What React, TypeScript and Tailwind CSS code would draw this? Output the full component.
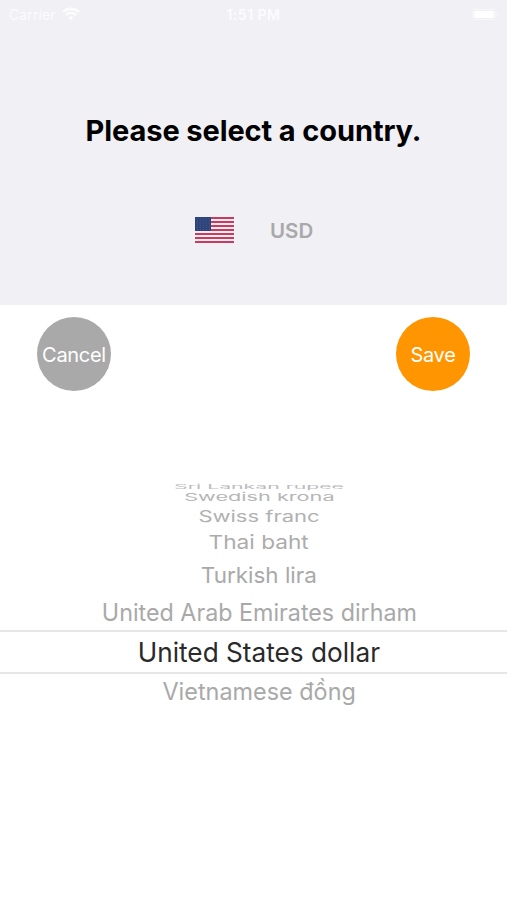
const rows = [
  { name: "Sri Lankan rupee", row: "h-[6px]", text: "text-[22px] scale-x-[0.965] scale-y-[0.27] text-[#bcbcbc]" },
  { name: "Swedish krona", row: "h-[14px]", text: "text-[22px] scale-x-[0.985] scale-y-[0.5] text-[#b6b6b6]" },
  { name: "Swiss franc", row: "h-[23px]", text: "text-[22px] scale-x-[1] scale-y-[0.7] text-[#b1b1b1]" },
  { name: "Thai baht", row: "h-[30px]", text: "text-[22px] scale-x-[1.03] scale-y-[0.88] text-[#acacac]" },
  { name: "Turkish lira", row: "h-[35px]", text: "text-[22px] scale-x-[1.02] text-[#a9a9a9]" },
  { name: "United Arab Emirates dirham", row: "h-[38px] pt-[3px]", text: "text-[24px] scale-x-[0.97] text-[#a9a9a9]" },
  { name: "United States dollar", row: "h-[44px] border-y-2 border-[#e6e6e6]", text: "text-[27px] scale-x-[0.97] text-[#2a2a2a]" },
  { name: "Vietnamese đồng", row: "h-[36px]", text: "text-[24px] scale-x-[0.975] text-[#a9a9a9]" },
];

function Flag() {
  return (
    <svg width="39" height="26" viewBox="0 0 39 26">
      <rect width="39" height="26" fill="#f6eaf0" />
      {[0, 2, 4, 6, 8, 10, 12].map((n) => (
        <rect key={n} y={n * 2} width="39" height="2" fill="#c43c5e" />
      ))}
      <rect width="16" height="14" fill="#2c4379" />
      {[0, 1, 2, 3, 4, 5].map((r) =>
        [0, 1, 2, 3, 4].map((c) => (
          <circle key={`${r}-${c}`} cx={2 + c * 3 + (r % 2) * 0.8} cy={1.8 + r * 2.1} r="0.4" fill="#8290b5" />
        ))
      )}
    </svg>
  );
}

export default function App() {
  return (
    <main className="flex h-[900px] w-[507px] flex-col overflow-hidden bg-white font-['Inter','Liberation_Sans',sans-serif]">
      <section className="flex h-[305px] flex-col bg-[#f0f0f5]">
        <div className="grid h-7 grid-cols-3 items-center px-[9px] text-[14px] text-[#fcfcfd]">
          <div className="flex items-center gap-[6px]">
            <span className="tracking-[0.1px]">Carrier</span>
            <svg width="18" height="14" viewBox="0 0 17 13" fill="none" stroke="currentColor" strokeWidth="2.4">
              <path d="M1 4.5C5 .7 12 .7 16 4.5M3.7 7.4C6.5 5 10.5 5 13.3 7.4" />
              <path d="M6 9.5Q8.5 7.6 11 9.5L8.5 12.3Z" fill="currentColor" stroke="none" />
            </svg>
          </div>
          <span className="text-center font-semibold tracking-[0.5px]">1:51 PM</span>
          <div className="flex items-center justify-end gap-px">
            <div className="h-[11px] w-[24px] rounded-[3px] border border-[#f7f7fa] p-px">
              <div className="h-full rounded-[1px] bg-white" />
            </div>
            <div className="h-1 w-px bg-[#f7f7fa]" />
          </div>
        </div>
        <h1 className="mt-[85px] flex h-9 items-center justify-center text-[29px] font-bold text-black">
          <span className="whitespace-nowrap tracking-[-0.1px]">Please select a country.</span>
        </h1>
        <div className="mt-[68px] flex h-[26px] items-center gap-9 pl-[195px]">
          <Flag />
          <span className="pt-[2px] text-[20.5px] font-semibold text-[#a9a9a9]">USD</span>
        </div>
      </section>
      <div className="flex h-[86px] items-end justify-between px-[37px]">
        <button className="flex size-[74px] items-center justify-center rounded-full bg-[#a9a9a9] pt-px text-[20px] tracking-[-0.3px] text-white">Cancel</button>
        <button className="flex size-[74px] items-center justify-center rounded-full bg-[#ff9500] pt-px text-[20px] tracking-[-0.3px] text-white">Save</button>
      </div>
      <div className="mt-[93px] flex flex-col">
        {rows.map(({ name, row, text }) => (
          <div key={name} className={`flex w-full shrink-0 items-center justify-center pl-[11px] ${row}`}>
            <span className={`inline-block whitespace-nowrap leading-none ${text}`}>{name}</span>
          </div>
        ))}
      </div>
    </main>
  );
}
